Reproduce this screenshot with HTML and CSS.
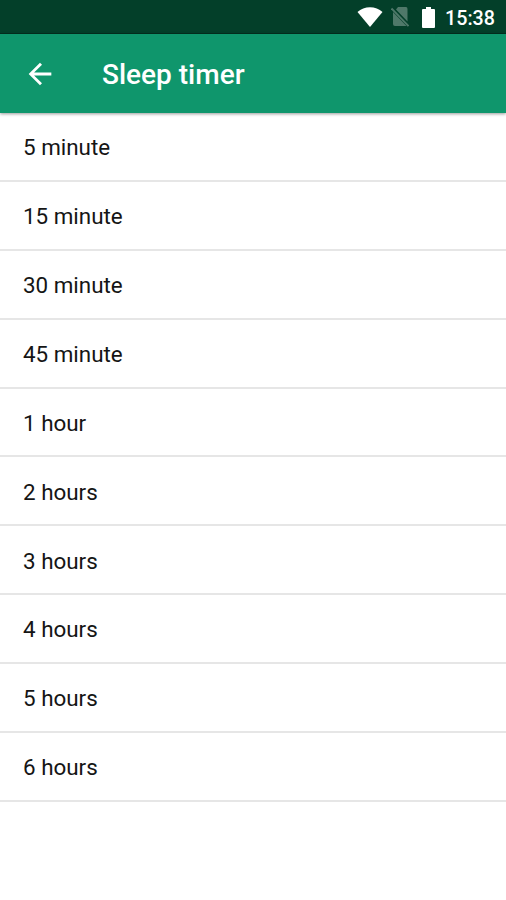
FILE: index.html
```html
<!DOCTYPE html>
<html lang="en">
<head>
<meta charset="utf-8">
<title>Sleep timer</title>
<link rel="stylesheet" href="styles.css">
</head>
<body>
<div class="status">
<svg class="wifi" viewBox="0 0 26 20"><path d="M0.5 5C7-1.3 19-1.3 25.500 5L13 20Z"/></svg>
<svg class="sim" viewBox="0 0 18 20"><path d="M7 0H15Q16.500 0 16.500 2V14.500L5 2.500ZM2 5L15.500 19H4Q2 19 2 17Z"/><path class="slash" d="M0.500 1.500L17.500 19"/></svg>
<svg class="battery" viewBox="0 0 13 21"><path d="M4 0H9V2H12Q13 2 13 3V20Q13 21 12 21H1Q0 21 0 20V3Q0 2 1 2H4Z"/></svg>
<span class="clock">15:38</span>
</div>
<header class="bar">
<svg class="back" viewBox="0 0 24 24"><path d="M20 11H7.83l5.59-5.59L12 4l-8 8 8 8 1.41-1.41L7.83 13H20z"/></svg>
<h1 class="title">Sleep timer</h1>
</header>
<ul class="list">
<li class="item">5 minute</li>
<li class="item">15 minute</li>
<li class="item">30 minute</li>
<li class="item">45 minute</li>
<li class="item">1 hour</li>
<li class="item">2 hours</li>
<li class="item">3 hours</li>
<li class="item">4 hours</li>
<li class="item">5 hours</li>
<li class="item">6 hours</li>
</ul>
</body>
</html>
```
FILE: styles.css
```css
* { box-sizing: border-box; }
body { margin: 0; background: #fff; font-family: Roboto, sans-serif; color: #151515; }
.status { height: 34px; background: #033f29; border-bottom: 1px solid #03301f; display: flex; align-items: center; padding-top: 1px; padding-right: 11px; justify-content: flex-end; color: #fff; }
.status svg { fill: #fff; flex: none; }
.status .wifi { width: 26px; height: 20px; margin-right: 8px; }
.status .sim { width: 18px; height: 20px; margin-right: 13px; fill: #4f7869; }
.slash { stroke: #4f7869; stroke-width: 1.8; }
.status .battery { width: 13px; height: 21px; margin-right: 10px; }
.clock { font-size: 19.7px; font-weight: 500; line-height: 28px; padding-top: 4px; }
.bar { height: 79px; background: #0f966c; display: flex; align-items: center; padding-left: 23px; color: #fff; position: relative; box-shadow: 0 1px 3px rgba(0,0,0,.4); }
.back { width: 34px; height: 34px; fill: #fff; margin-right: 45px; }
.title { margin: 0; font-size: 28px; font-weight: 500; line-height: 34px; padding-top: 2px; }
.list { list-style: none; margin: 0; padding: 0; }
.item { height: 68.9px; padding-left: 23px; font-size: 22.4px; line-height: 66px; padding-top: 1.2px; border-bottom: 2px solid #e6e6e6; }
```
